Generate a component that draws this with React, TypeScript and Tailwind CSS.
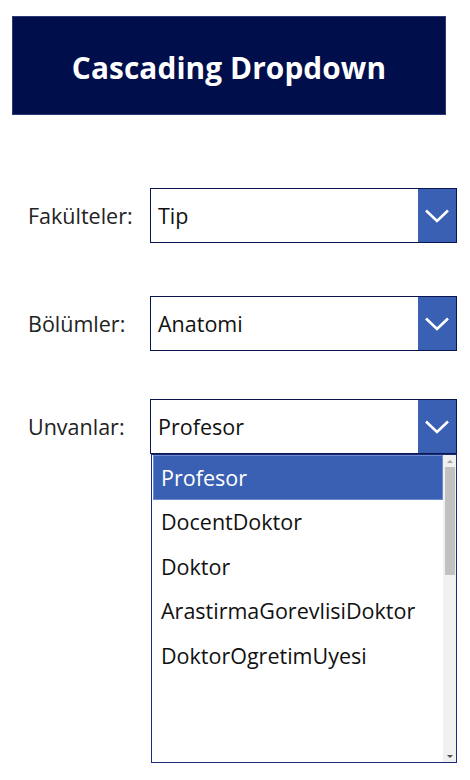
import React from "react";

const font = { fontFamily: '"Open Sans", "Noto Sans", sans-serif' };

function Chevron() {
  return (
    <svg width="26" height="16" viewBox="0 0 26 16" fill="none">
      <path d="M2 2.5 L13 13 L24 2.5" stroke="white" strokeWidth="2.6" strokeLinejoin="miter" />
    </svg>
  );
}

function Box({ value }: { value: string }) {
  return (
    <div className="w-[307px] h-[55px] border border-[#0a1550] flex bg-white">
      <div className="flex-1 flex items-center pl-[7px] pt-[1px] text-[21.5px] text-[#111]">{value}</div>
      <div className="w-[38px] bg-[#3a60b3] flex items-center justify-center">
        <Chevron />
      </div>
    </div>
  );
}

function Row({ label, value, children }: { label: string; value: string; children?: React.ReactNode }) {
  return (
    <div className="flex items-start pl-[28px]">
      <div className="w-[122px] h-[55px] pt-[1px] flex items-center text-[21.5px] text-[#222]">{label}</div>
      <div className="flex flex-col">
        <Box value={value} />
        {children}
      </div>
    </div>
  );
}

const items = ["Profesor", "DocentDoktor", "Doktor", "ArastirmaGorevlisiDoktor", "DoktorOgretimUyesi"];

export default function App() {
  return (
    <div className="w-[470px] h-[780px] bg-white overflow-hidden pt-[16px]" style={font}>
      <div className="ml-[12px] w-[434px] h-[99px] pt-[5px] bg-[#000e4b] border border-[#2c3a78] flex items-center justify-center">
        <span className="text-white font-bold text-[29.8px] tracking-[0.1px]">Cascading Dropdown</span>
      </div>
      <div className="mt-[73px] flex flex-col">
        <Row label="Fakülteler:" value="Tip" />
        <div className="h-[53px]" />
        <Row label="Bölümler:" value="Anatomi" />
        <div className="h-[48px]" />
        <Row label="Unvanlar:" value="Profesor">
          <div className="ml-[1px] w-[306px] h-[309px] border border-[#1c2a78] flex bg-white">
            <div className="flex-1 flex flex-col pl-[1px]">
              {items.map((it, i) => (
                <div
                  key={it}
                  className={
                    i === 0
                      ? "h-[44.5px] flex items-center pl-[7px] pt-[1px] text-[21.5px] bg-[#3a60b3] text-white border border-[#6d8bd0]"
                      : "h-[44.5px] flex items-center pl-[8px] pt-[1px] text-[21.5px] text-[#111]"
                  }
                >
                  {it}
                </div>
              ))}
            </div>
            <div className="w-[13px] bg-[#f0f0f0] flex flex-col items-center">
              <div className="h-[12px] flex items-center justify-center">
                <div className="w-0 h-0 border-l-[3px] border-r-[3px] border-b-[3px] border-l-transparent border-r-transparent border-b-[#a3a3a3]" />
              </div>
              <div className="w-[10px] h-[108px] bg-[#c1c1c1]" />
              <div className="flex-1" />
              <div className="h-[12px] flex items-center justify-center">
                <div className="w-0 h-0 border-l-[3px] border-r-[3px] border-t-[3px] border-l-transparent border-r-transparent border-t-[#505050]" />
              </div>
            </div>
          </div>
        </Row>
      </div>
    </div>
  );
}
